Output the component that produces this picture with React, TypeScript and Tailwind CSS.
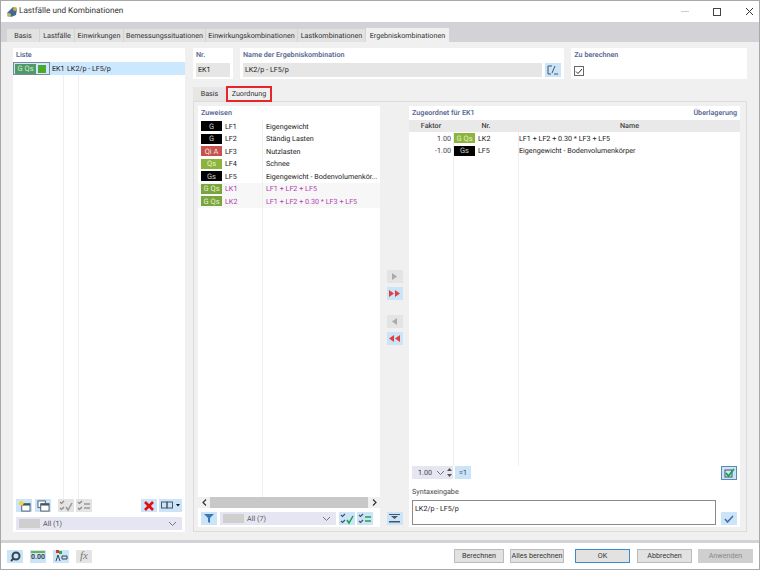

import React from "react";

function Badge({ label, bg, fg = "text-[#d8e8c0]", w = "w-[21px]" }: { label: string; bg: string; fg?: string; w?: string }) {
  return <div className={`${w} h-[10px] ${bg} ${fg} flex items-center justify-center text-[7.5px] leading-none shrink-0`}>{label}</div>;
}

function IconBtn({ children, active = true, w = "w-4" }: { children?: React.ReactNode; active?: boolean; w?: string }) {
  return <div className={`${w} h-[13px] flex items-center justify-center shrink-0 ${active ? "bg-[#cce4f7]" : "bg-[#e4e4e4]"}`}>{children}</div>;
}

const rows: [string, string, string, string, boolean][] = [
  ["G", "bg-black", "LF1", "Eigengewicht", false],
  ["G", "bg-black", "LF2", "Ständig Lasten", false],
  ["Qi A", "bg-[#c85050]", "LF3", "Nutzlasten", false],
  ["Qs", "bg-[#8cb43c]", "LF4", "Schnee", false],
  ["Gs", "bg-black", "LF5", "Eigengewicht - Bodenvolumenkör...", false],
  ["G Qs", "bg-[#7aa53c]", "LK1", "LF1 + LF2 + LF5", true],
  ["G Qs", "bg-[#7aa53c]", "LK2", "LF1 + LF2 + 0.30 * LF3 + LF5", true],
];

const tabs: [string, string][] = [
  ["Basis", "w-[32px]"],
  ["Lastfälle", "w-[34px]"],
  ["Einwirkungen", "w-[48px]"],
  ["Bemessungssituationen", "w-[81px]"],
  ["Einwirkungskombinationen", "w-[91px]"],
  ["Lastkombinationen", "w-[67px]"],
];

function Chevron() {
  return (
    <svg width="9" height="6" viewBox="0 0 9 6" fill="none" stroke="#777" strokeWidth="1"><path d="M1 1l3.5 3.5L8 1" /></svg>
  );
}

function CheckList({ color = "#888", second = false }: { color?: string; second?: boolean }) {
  return (
    <svg width="14" height="12" viewBox="0 0 14 12" fill="none" strokeWidth="1.2">
      <path d="M1 2l1.5 1.5L5 1M1 8l1.5 1.5L5 7" stroke={color} />
      {second ? <path d="M7 4h6M7 8h6" stroke={color === "#888" ? "#999" : "#2a9d4a"} strokeWidth="1.5" /> : <path d="M7 7l2 3 4-7" stroke={color === "#888" ? "#999" : "#19a04b"} strokeWidth="1.5" />}
    </svg>
  );
}

export default function App() {
  return (
    <div className="w-[760px] h-[570px] flex flex-col bg-white border border-[#a8a8a8] text-[7.2px] leading-none text-[#222] font-['Roboto','Noto_Sans',sans-serif] [text-rendering:geometricPrecision] overflow-hidden">
      {/* Title bar */}
      <div className="h-[21px] flex items-center shrink-0 bg-white">
        <svg width="12" height="12" viewBox="0 0 12 12" className="ml-[5px] mr-[1px]">
          <path d="M1 7l6-6 4 2-1 6-5 2z" fill="#3d6a94" />
          <circle cx="9" cy="3" r="2" fill="#d8a93a" />
          <circle cx="3" cy="9" r="2" fill="#c9b26a" />
        </svg>
        <span className="text-[8.2px] text-[#333]">Lastfälle und Kombinationen</span>
        <div className="flex-1" />
        <div className="w-[8px] h-px bg-[#ccc] mr-[24px]" />
        <div className="w-[8px] h-[8px] border border-[#444] mr-[24px]" />
        <svg width="9" height="9" viewBox="0 0 9 9" stroke="#333" strokeWidth="1" className="mr-[5px]"><path d="M1 1l7 7M8 1l-7 7" /></svg>
      </div>

      {/* Tabs */}
      <div className="h-[20px] shrink-0 bg-[#d3d3d7] flex items-end pl-[6px]">
        <div className="h-[13px] flex items-center gap-[1px]">
          {tabs.map(([t, w]) => (
            <div key={t} className={`h-full ${w} pt-px flex items-center justify-center bg-[#e2e2e2] text-[#333]`}>{t}</div>
          ))}
        </div>
        <div className="h-[14px] w-[83px] ml-[1px] pt-[2px] flex items-center justify-center bg-[#f0f0f0] text-[#333]">Ergebniskombinationen</div>
      </div>

      {/* Body */}
      <div className="flex-1 min-h-0 bg-[#f0f0f0] flex gap-[8px] pl-[12px] pr-[12px] pt-[6px] pb-[8px]">
        {/* Left list */}
        <div className="w-[172px] bg-white flex flex-col shrink-0 pb-[2px]">
          <div className="h-[14px] px-[3px] flex items-center font-semibold text-[#5a6a94]">Liste</div>
          <div className="h-[13px] bg-[#cce8ff] flex items-center shrink-0">
            <div className="w-[37px] h-[13px] border border-[#7a8a94] flex items-center pl-[1px] gap-[2px] shrink-0">
              <Badge label="G Qs" bg="bg-[#4f9a6a]" w="w-[21px]" />
              <div className="w-[8px] h-[8px] bg-[#4ea72e]" />
            </div>
            <span className="ml-[2px] w-[15px]">EK1</span>
            <span>LK2/p - LF5/p</span>
          </div>
          <div className="flex-1 flex min-h-0">
            <div className="w-[51px] border-r border-[#efefef]" />
            <div className="w-[15px] border-r border-[#efefef]" />
          </div>
          <div className="h-[13px] flex items-center px-[3px] mb-[5px] shrink-0">
            <IconBtn><svg width="13" height="12" viewBox="0 0 14 13"><rect x="4" y="4" width="9" height="8" fill="#fff" stroke="#456" /><rect x="4" y="4" width="9" height="2" fill="#456" /><circle cx="3.5" cy="3.5" r="2.5" fill="#f2d43d" /></svg></IconBtn>
            <div className="w-[2px]" />
            <div className="ml-px"><IconBtn><svg width="13" height="12" viewBox="0 0 14 13"><rect x="1" y="1" width="8" height="7" fill="#fff" stroke="#456" /><rect x="4" y="4" width="9" height="8" fill="#fff" stroke="#456" /><rect x="4" y="4" width="9" height="2" fill="#456" /></svg></IconBtn></div>
            <div className="w-[7px]" />
            <IconBtn active={false}><CheckList /></IconBtn>
            <div className="w-[2px]" />
            <IconBtn active={false}><CheckList second /></IconBtn>
            <div className="flex-1" />
            <IconBtn><svg width="10" height="10" viewBox="0 0 10 10" stroke="#e01010" strokeWidth="2.6"><path d="M1 1l8 8M9 1l-8 8" /></svg></IconBtn>
            <div className="w-[2px]" />
            <IconBtn w="w-[23px]"><svg width="20" height="9" viewBox="0 0 20 9" fill="none"><rect x="0.5" y="1" width="5.5" height="6" stroke="#456" /><rect x="6" y="1" width="5.5" height="6" stroke="#456" /><path d="M15 3h4l-2 2.5z" fill="#111" /></svg></IconBtn>
          </div>
          <div className="h-[13px] mx-[3px] bg-[#e6e6f2] flex items-center pl-[3px] pr-[5px] text-[#555] shrink-0">
            <div className="w-[21px] h-[9px] bg-[#cfcfcf] mr-[3px]" />
            <span>All (1)</span>
            <div className="flex-1" />
            <Chevron />
          </div>
        </div>

        {/* Right column */}
        <div className="flex-1 flex flex-col min-w-0">
          {/* Header row */}
          <div className="h-[31px] flex gap-[7px] shrink-0">
            <div className="w-[40px] bg-white px-[3px] flex flex-col">
              <div className="h-[14px] flex items-center font-semibold text-[#5a6a94]">Nr.</div>
              <div className="h-[14px] mt-[1px] bg-[#e6e6e6] flex items-center px-[2px]">EK1</div>
            </div>
            <div className="w-[325px] bg-white px-[3px] flex flex-col">
              <div className="h-[14px] flex items-center font-semibold text-[#5a6a94]">Name der Ergebniskombination</div>
              <div className="mt-[1px] flex h-[14px] gap-[3px]">
                <div className="flex-1 bg-[#e6e6e6] flex items-center px-[2px]">LK2/p - LF5/p</div>
                <div className="w-4 h-[14px] bg-[#cce4f7] flex items-center justify-center"><svg width="12" height="10" viewBox="0 0 12 10" fill="none" stroke="#456"><path d="M1 1h4M1 1v8h3M5 8l3-7M7 9h4" /></svg></div>
              </div>
            </div>
            <div className="w-[176px] bg-white px-[3px] flex flex-col">
              <div className="h-[14px] flex items-center font-semibold text-[#5a6a94]">Zu berechnen</div>
              <div className="w-[10px] h-[10px] border border-[#666] mt-[4px] flex items-center justify-center">
                <svg width="8" height="7" viewBox="0 0 8 7" fill="none" stroke="#333"><path d="M1 3.5l2 2L7 1" /></svg>
              </div>
            </div>
          </div>

          {/* Inner tabs */}
          <div className="h-[15px] mt-[7px] flex items-end shrink-0 relative z-10">
            <div className="h-[14px] w-[33px] bg-[#e6e6e6] flex items-center justify-center text-[#333]">Basis</div>
            <div className="h-[16px] w-[46px] bg-[#f0f0f0] border-2 border-[#e8262a] flex items-center justify-center text-[#333] mb-[-1px]">Zuordnung</div>
          </div>

          {/* Panel */}
          <div className="flex-1 min-h-0 border border-[#dcdcdc] p-[4px] pr-[6px] flex">
            {/* Assign */}
            <div className="w-[182px] bg-white flex flex-col shrink-0">
              <div className="h-[14px] px-[3px] flex items-center font-semibold text-[#5a6a94]">Zuweisen</div>
              <div className="flex-1 min-h-0 relative flex flex-col">
                <div className="absolute left-[64px] top-0 bottom-0 w-px bg-[#efefef]" />
                {rows.map(([b, bg, id, name, pink]) => (
                  <div key={id} className={`h-[12.5px] flex items-center pl-[3px] shrink-0 ${pink ? "bg-[#f7f7f7] text-[#b040b0]" : ""}`}>
                    <Badge label={b} bg={bg} w="w-[21px]" fg={bg === "bg-black" ? "text-[#ccc]" : "text-[#e4f0d0]"} />
                    <span className="ml-[3px] w-[41px]">{id}</span>
                    <span className="whitespace-nowrap">{name}</span>
                  </div>
                ))}
              </div>
              <div className="h-[11px] flex items-center shrink-0 bg-[#f0f0f0]">
                <div className="w-[12px] flex justify-center"><svg width="5" height="7" viewBox="0 0 5 7" fill="none" stroke="#333" strokeWidth="1.2"><path d="M4 .5L1 3.5l3 3" /></svg></div>
                <div className="flex-1 h-full bg-[#c8c8c8]" />
                <div className="w-[12px] flex justify-center"><svg width="5" height="7" viewBox="0 0 5 7" fill="none" stroke="#333" strokeWidth="1.2"><path d="M1 .5l3 3-3 3" /></svg></div>
              </div>
              <div className="h-[13px] mt-[4px] mb-[2px] mx-[3px] flex items-center gap-[2px] shrink-0">
                <IconBtn><svg width="10" height="9" viewBox="0 0 10 9"><path d="M0 0h10L6 4v5L4 8V4z" fill="#3a78b8" /></svg></IconBtn>
                <div className="w-[116px] h-[13px] ml-px bg-[#e6e6f2] flex items-center pl-[3px] pr-[5px] text-[#555]">
                  <div className="w-[21px] h-[9px] bg-[#cfcfcf] mr-[3px]" />
                  <span>All (7)</span>
                  <div className="flex-1" />
                  <Chevron />
                </div>
                <div className="ml-px"><IconBtn><CheckList color="#456" /></IconBtn></div>
                <IconBtn><CheckList color="#456" second /></IconBtn>
              </div>
            </div>

            {/* Arrow column */}
            <div className="w-[29px] flex flex-col items-center shrink-0">
              <div className="h-[164px]" />
              <IconBtn active={false}><svg width="7" height="7" viewBox="0 0 7 7"><path d="M1 0l5 3.5L1 7z" fill="#aaa" /></svg></IconBtn>
              <div className="h-[4px]" />
              <IconBtn><svg width="11" height="7" viewBox="0 0 11 7"><path d="M0 0l5 3.5L0 7zM6 0l5 3.5L6 7z" fill="#e04040" /></svg></IconBtn>
              <div className="h-[15px]" />
              <IconBtn active={false}><svg width="7" height="7" viewBox="0 0 7 7"><path d="M6 0L1 3.5 6 7z" fill="#aaa" /></svg></IconBtn>
              <div className="h-[4px]" />
              <IconBtn><svg width="11" height="7" viewBox="0 0 11 7"><path d="M5 0L0 3.5 5 7zM11 0L6 3.5 11 7z" fill="#e04040" /></svg></IconBtn>
              <div className="flex-1" />
              <div className="mb-[2px]"><IconBtn><svg width="11" height="9" viewBox="0 0 11 9" fill="#456"><path d="M0 0h11v1H0zM2 2h7L5.5 5zM0 7h11v1.5H0z" /></svg></IconBtn></div>
            </div>

            {/* Assigned */}
            <div className="flex-1 bg-white flex flex-col min-w-0">
              <div className="h-[14px] px-[3px] flex items-center justify-between font-semibold text-[#5a6a94] shrink-0">
                <span>Zugeordnet für EK1</span>
                <span>Überlagerung</span>
              </div>
              <div className="h-[12px] flex bg-[#e9e9e9] text-[#444] font-medium shrink-0">
                <div className="w-[44px] flex items-center justify-center">Faktor</div>
                <div className="w-[64px] ml-px flex items-center justify-center">Nr.</div>
                <div className="flex-1 ml-px flex items-center justify-center">Name</div>
              </div>
              <div className="flex-1 min-h-0 relative">
                <div className="absolute left-[44px] top-0 bottom-0 w-px bg-[#efefef]" />
                <div className="absolute left-[109px] top-0 bottom-0 w-px bg-[#efefef]" />
                {[["1.00", "G Qs", "bg-[#8cb43c]", "LK2", "LF1 + LF2 + 0.30 * LF3 + LF5"], ["-1.00", "Gs", "bg-black", "LF5", "Eigengewicht - Bodenvolumenkörper"]].map((r) => (
                  <div key={r[3]} className="h-[12.5px] flex items-center first:mt-[1px]">
                    <div className="w-[42px] text-right text-[#444]">{r[0]}</div>
                    <div className="ml-[3px]"><Badge label={r[1]} bg={r[2]} fg={r[2] === "bg-black" ? "text-[#ccc]" : "text-[#e4f0d0]"} /></div>
                    <span className="ml-[3px] w-[41px]">{r[3]}</span>
                    <span>{r[4]}</span>
                  </div>
                ))}
              </div>
              <div className="h-[13px] flex items-center px-[3px] mb-[8px] shrink-0">
                <div className="w-[41px] h-[13px] bg-[#e6e6f2] flex items-center pl-[6px] text-[#444]">
                  <span className="w-[18px]">1.00</span>
                  <Chevron />
                  <svg width="5" height="9" viewBox="0 0 5 9" fill="#555" className="ml-[2px]"><path d="M2.5 0L5 3H0zM2.5 9L0 6h5z" /></svg>
                </div>
                <div className="ml-[2px] w-[16px] h-[13px] bg-[#cce4f7] flex items-center justify-center text-[#456]">=1</div>
                <div className="flex-1" />
                <div className="w-[16px] h-[14px] bg-[#cce4f7] border border-[#5a8ab0] flex items-center justify-center">
                  <svg width="11" height="10" viewBox="0 0 11 10" fill="none"><rect x="1" y="2" width="7" height="7" stroke="#456" /><path d="M2 5l2.5 3L10 1" stroke="#17a34a" strokeWidth="1.8" /></svg>
                </div>
              </div>
              <div className="h-[10px] px-[3px] flex items-center text-[#444] shrink-0">Syntaxeingabe</div>
              <div className="h-[25px] mt-[3px] mb-[2px] flex items-end pl-[3px] pr-[3px] gap-[5px] shrink-0">
                <div className="flex-1 h-[25px] border border-[#8a8a8a] px-[2px] pt-[4px]">LK2/p - LF5/p</div>
                <IconBtn><svg width="10" height="8" viewBox="0 0 10 8" fill="none" stroke="#3a6ea5" strokeWidth="1.5"><path d="M1 4l2.5 3L9 1" /></svg></IconBtn>
              </div>
            </div>
          </div>
        </div>
      </div>

      {/* Footer */}
      <div className="h-[29px] shrink-0 bg-white border-t-[3px] border-[#d3d3d7] flex items-center pl-[6px] pr-[6px]">
        <IconBtn><svg width="11" height="11" viewBox="0 0 11 11"><circle cx="6" cy="5" r="3.5" fill="none" stroke="#345" strokeWidth="2" /><path d="M3.5 7.5L1 10" stroke="#345" strokeWidth="2" /></svg></IconBtn>
        <div className="ml-[7px]"><IconBtn><div className="text-[7px] font-bold text-[#345] border-t-2 border-[#6db04a] leading-[9px]">0.00</div></IconBtn></div>
        <div className="ml-[7px]"><IconBtn><svg width="13" height="12" viewBox="0 0 13 12"><rect x="1" y="0" width="3" height="3" fill="#d33" /><rect x="4" y="1" width="3" height="3" fill="#3a3" /><path d="M1 11l2-6 2 6M7 6h5v3H7z" fill="none" stroke="#345" /></svg></IconBtn></div>
        <div className="ml-[7px]"><IconBtn active={false}><span className="font-['Liberation_Serif',serif] italic text-[11px] text-[#777]">fx</span></IconBtn></div>
        <div className="flex-1" />
        <button className="w-[50px] h-[14px] bg-[#e2e2e2] border border-[#bbb] text-[#333]">Berechnen</button>
        <button className="ml-[6px] w-[54px] h-[14px] bg-[#e2e2e2] border border-[#bbb] text-[#333] whitespace-nowrap">Alles berechnen</button>
        <button className="ml-[11px] w-[55px] h-[14px] bg-[#e2e2e2] border border-[#3a8ad0] text-[#333]">OK</button>
        <button className="ml-[7px] w-[55px] h-[14px] bg-[#e2e2e2] border border-[#bbb] text-[#333]">Abbrechen</button>
        <button className="ml-[6px] w-[55px] h-[14px] bg-[#cfcfcf] text-[#888]">Anwenden</button>
      </div>
    </div>
  );
}
